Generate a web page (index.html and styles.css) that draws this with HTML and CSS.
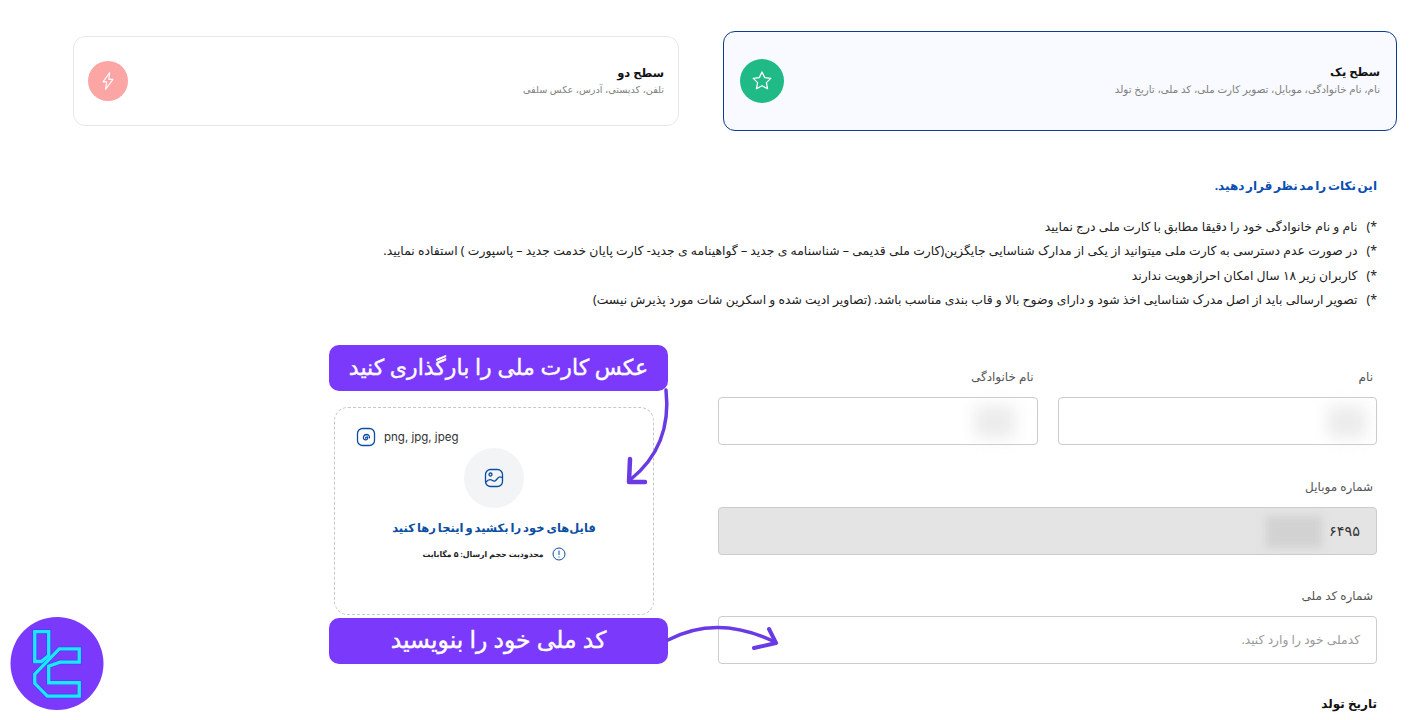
FILE: index.html
```html
<!DOCTYPE html>
<html lang="fa" dir="rtl">

<head>
  <meta charset="UTF-8">
  <meta name="viewport" content="width=device-width, initial-scale=1.0">
  <title>احراز هویت</title>
  <link rel="stylesheet" href="styles.css">
</head>

<body>
  <div class="levels">
    <div class="level level-active">
      <div class="level-text">
        <h3>سطح یک</h3>
        <p>نام، نام خانوادگی، موبایل، تصویر کارت ملی، کد ملی، تاریخ تولد</p>
      </div>
      <span class="level-icon icon-green">
        <svg width="24" height="24" viewBox="0 0 24 24" fill="none" stroke="#fff" stroke-width="1.3" stroke-linejoin="round"><path d="M12 3l2.7 5.6 6.1.8-4.4 4.2 1.1 6.1L12 16.8l-5.5 2.9 1.100-6.100-4.400-4.200 6.100-.8z"/></svg>
      </span>
    </div>
    <div class="level level-second">
      <div class="level-text">
        <h3>سطح دو</h3>
        <p>تلفن، کدپستی، آدرس، عکس سلفی</p>
      </div>
      <span class="level-icon icon-red">
        <svg width="20" height="20" viewBox="0 0 24 24" fill="none" stroke="#fff" stroke-width="1.3" stroke-linejoin="round"><path d="M14 2L6 13h4.500L9 22l9-12h-5z"/></svg>
      </span>
    </div>
  </div>

  <div class="notes">
    <h4>این نکات را مد نظر قرار دهید.</h4>
    <ul>
      <li><span class="mark">*)</span>نام و نام خانوادگی خود را دقیقا مطابق با کارت ملی درج نمایید</li>
      <li><span class="mark">*)</span>در صورت عدم دسترسی به کارت ملی میتوانید از یکی از مدارک شناسایی جایگزین(کارت ملی قدیمی – شناسنامه ی جدید – گواهینامه ی جدید- کارت پایان خدمت جدید – پاسپورت ) استفاده نمایید.</li>
      <li><span class="mark">*)</span>کاربران زیر ۱۸ سال امکان احرازهویت ندارند</li>
      <li><span class="mark">*)</span>تصویر ارسالی باید از اصل مدرک شناسایی اخذ شود و دارای وضوح بالا و قاب بندی مناسب باشد. (تصاویر ادیت شده و اسکرین شات مورد پذیرش نیست)</li>
    </ul>
  </div>

  <div class="form-wrap">
    <form class="fields">
      <div class="row">
        <div class="field">
          <label>نام</label>
          <div class="input"><span class="blur blur-first"></span></div>
        </div>
        <div class="field">
          <label>نام خانوادگی</label>
          <div class="input"><span class="blur blur-last"></span></div>
        </div>
      </div>
      <div class="field">
        <label>شماره موبایل</label>
        <div class="input input-disabled">۶۴۹۵<span class="blur blur-phone"></span></div>
      </div>
      <div class="field">
        <label>شماره کد ملی</label>
        <div class="input input-empty">کدملی خود را وارد کنید.</div>
      </div>
      <label class="birth">تاریخ تولد</label>
    </form>

    <div class="upload">
      <div class="formats" dir="ltr">
        <svg width="20" height="20" viewBox="0 0 20 20" fill="none" stroke="#0b4ea2" stroke-width="1.300" stroke-linecap="round"><rect x="1.500" y="1.500" width="17" height="17" rx="5"/><path d="M9.500 11.200c.2-1.400 2-1.600 2.200-.3.2 1.600-2.300 2.600-3.700 1.300-1.500-1.500-.2-4.600 2.400-4.700 2 0 3.300 1.300 3 3.300"/></svg>
        <span>png, jpg, jpeg</span>
      </div>
      <div class="drop-circle">
        <svg width="20" height="20" viewBox="0 0 20 20" fill="none" stroke="#0b4ea2" stroke-width="1.300" stroke-linecap="round" stroke-linejoin="round"><rect x="1.500" y="1.500" width="17" height="17" rx="5"/><circle cx="6.500" cy="6.500" r="1.500"/><path d="M2 14c2.500-3 4.500-3 6.500-1.500s3.500 0 5-2 3-2 4.500-1"/></svg>
      </div>
      <div class="drop-title">فایل‌های خود را بکشید و اینجا رها کنید</div>
      <div class="drop-limit">
        <svg width="14" height="14" viewBox="0 0 14 14" fill="none" stroke="#0b4ea2" stroke-width="1"><circle cx="7" cy="7" r="6"/><path d="M7 3.500v4.500M7 9.500v1"/></svg>
        <span>محدودیت حجم ارسال: ۵ مگابایت</span>
      </div>
    </div>
  </div>

  <!-- annotations on top of the screenshot -->
  <div class="callout callout-upload">عکس کارت ملی را بارگذاری کنید</div>
  <div class="callout callout-code">کد ملی خود را بنویسید</div>

  <svg class="arrow arrow-upload" width="60" height="110" viewBox="620 385 60 110" fill="none" stroke="#6a3be4" stroke-linecap="round" stroke-linejoin="round"><path d="M666 390c4 36-6 66-36 90" stroke-width="3.500"/><path d="M630 459l-1 23h16" stroke-width="4.500"/></svg>
  <svg class="arrow arrow-code" width="125" height="35" viewBox="660 620 125 35" fill="none" stroke="#6a3be4" stroke-linecap="round" stroke-linejoin="round"><path d="M668 640c32-17 68-17 107 2" stroke-width="3.500"/><path d="M769 629l7 14-22 5" stroke-width="4"/></svg>

  <div class="logo">
    <svg width="94" height="93" viewBox="30 50 282 280" fill="none" stroke-linejoin="miter">
      <circle cx="171" cy="190" r="140" fill="#7a39fb"/>
      <g stroke="#3f44f5" stroke-width="14">
        <path d="M104 94h42v72l-22 18h-20z"/>
        <path d="M238 146h-60l-74 76v28l38 38h96v-40h-92v-50l34-12h58z"/>
      </g>
      <g stroke="#1fe6ff" stroke-width="10">
        <path d="M104 94h42v72l-22 18h-20z"/>
        <path d="M238 146h-60l-74 76v28l38 38h96v-40h-92v-50l34-12h58z"/>
      </g>
    </svg>
  </div>
</body>

</html>
```
FILE: styles.css
```css
* {
  box-sizing: border-box;
}

html, body {
  overflow: hidden;
}

body {
  font-family: "Noto Sans", "DejaVu Sans", sans-serif;
  font-size: 12px;
  background-color: #fff;
  color: #333;
  margin: 0;
  padding: 31px 25px 0 73px;
  height: 720px;
  position: relative;
}

.levels {
  display: flex;
  align-items: center;
  gap: 44px;
}

.level {
  display: flex;
  justify-content: space-between;
  align-items: center;
  width: 606px;
  height: 90px;
  padding: 0 14px 0 14px;
  border: 1px solid #e8e8e8;
  border-radius: 12px;
}

.level-active {
  width: 674px;
  height: 100px;
  padding: 0 16px;
  background-color: #f8faff;
  border-color: #0b3d91;
}

.level-text {
  padding-bottom: 2px;
}

.level-text h3 {
  margin: 0 0 3px;
  font-size: 11.500px;
  font-weight: bold;
  color: #111;
}

.level-text p {
  margin: 0;
  font-size: 10.300px;
  color: #808080;
}

.level-second p {
  font-size: 9.700px;
}

.level-icon {
  display: flex;
  align-items: center;
  justify-content: center;
  width: 44px;
  height: 44px;
  border-radius: 50%;
}

.icon-green {
  background-color: #1fba85;
}

.icon-red {
  width: 40px;
  height: 40px;
  background-color: #fca5a5;
}

.notes {
  margin: 46px 20px 0 0;
}

.notes h4 {
  margin: 0;
  font-size: 12px;
  font-weight: bold;
  word-spacing: -1.500px;
  color: #0a4fb0;
}

.notes ul {
  list-style: none;
  margin: 21px 0 0;
  padding: 0;
}

.notes li {
  height: 24.300px;
  line-height: 24px;
  font-size: 12.400px;
  color: #222;
}

.mark {
  margin-left: 9px;
}

.form-wrap {
  display: flex;
  gap: 64px;
  margin: 55px 20px 0 0;
}

.fields {
  width: 659px;
  flex-shrink: 0;
}

.row {
  display: flex;
  gap: 20px;
  margin-bottom: 1px;
}

.row .field {
  flex: 1;
}

.field {
  margin-bottom: 31px;
}

.field label {
  display: block;
  height: 30px;
  line-height: 20px;
  padding-right: 4px;
  font-size: 12px;
  color: #555;
}

.input {
  position: relative;
  height: 48px;
  line-height: 46px;
  padding: 0 16px;
  border: 1px solid #ccc;
  border-radius: 4px;
  font-size: 14.400px;
  color: #333;
}

.input-disabled {
  background-color: #e4e4e4;
}

.input-empty {
  font-size: 12.300px;
  color: #9a9a9a;
}

.blur {
  position: absolute;
  top: 8px;
  height: 32px;
  background-color: #d8d8d8;
  filter: blur(8px);
}

.blur-first {
  right: 10px;
  width: 38px;
  opacity: 0.5;
}

.blur-last {
  right: 22px;
  width: 40px;
  opacity: 0.5;
}

.blur-phone {
  right: 54px;
  width: 56px;
  background-color: #d2d2d2;
  filter: blur(4px);
}

.birth {
  display: block;
  margin-top: 1px;
  font-size: 12px;
  font-weight: bold;
  color: #111;
}

.upload {
  width: 320px;
  height: 208px;
  margin-top: 40px;
  padding: 19px 21px 0;
  border: 1px dashed #c8c8c8;
  border-radius: 14px;
}

.formats {
  display: flex;
  align-items: center;
  gap: 8px;
  font-family: Inter, sans-serif;
  font-size: 11.500px;
  color: #333;
}

.drop-circle {
  display: flex;
  align-items: center;
  justify-content: center;
  width: 60px;
  height: 60px;
  margin: 1px auto 0;
  border-radius: 50%;
  background-color: #f2f4f6;
}

.drop-title {
  margin-top: 12px;
  text-align: center;
  font-size: 11.500px;
  font-weight: bold;
  word-spacing: -1px;
  color: #0b4ea2;
}

.drop-limit {
  display: flex;
  justify-content: center;
  align-items: center;
  gap: 8px;
  margin-top: 12px;
  font-size: 7.800px;
  font-weight: bold;
  color: #222;
}

.callout {
  position: absolute;
  left: 329px;
  width: 339px;
  height: 46px;
  padding-bottom: 4px;
  display: flex;
  align-items: center;
  justify-content: center;
  background-color: #7a39fb;
  border-radius: 10px;
  color: #fff;
  font-size: 22px;
  -webkit-text-stroke: 0.4px #fff;
}

.callout-upload {
  top: 345px;
}

.callout-code {
  top: 618px;
  font-size: 23.500px;
}

.arrow {
  position: absolute;
}

.arrow-upload {
  left: 620px;
  top: 385px;
}

.arrow-code {
  left: 660px;
  top: 620px;
}

.logo {
  position: absolute;
  left: 10px;
  top: 617px;
  width: 94px;
  height: 93px;
}
```
